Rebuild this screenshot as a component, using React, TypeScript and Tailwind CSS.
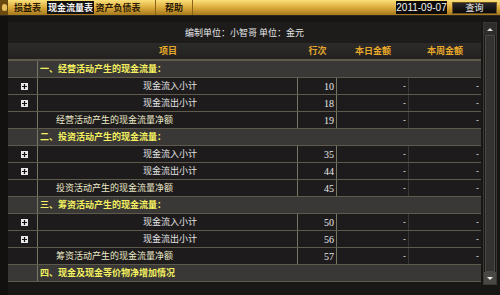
import React from 'react';

type Row =
  | { kind: 'section'; label: string }
  | { kind: 'sub'; label: string; no: number }
  | { kind: 'net'; label: string; no: number };

const rows: Row[] = [
  { kind: 'section', label: '一、经营活动产生的现金流量：' },
  { kind: 'sub', label: '现金流入小计', no: 10 },
  { kind: 'sub', label: '现金流出小计', no: 18 },
  { kind: 'net', label: '经营活动产生的现金流量净额', no: 19 },
  { kind: 'section', label: '二、投资活动产生的现金流量：' },
  { kind: 'sub', label: '现金流入小计', no: 35 },
  { kind: 'sub', label: '现金流出小计', no: 44 },
  { kind: 'net', label: '投资活动产生的现金流量净额', no: 45 },
  { kind: 'section', label: '三、筹资活动产生的现金流量：' },
  { kind: 'sub', label: '现金流入小计', no: 50 },
  { kind: 'sub', label: '现金流出小计', no: 56 },
  { kind: 'net', label: '筹资活动产生的现金流量净额', no: 57 },
  { kind: 'section', label: '四、现金及现金等价物净增加情况' },
];

const cjk = "font-['Noto_Sans_CJK_SC',sans-serif]";
const cols = 'grid grid-cols-[30px_260px_39px_72px_72px]';

function PlusBox() {
  return (
    <span className="flex h-[7px] w-[7px] items-center justify-center bg-[#e8e8e8]">
      <svg width="5" height="5" viewBox="0 0 5 5">
        <path d="M0 2.5h5M2.5 0v5" stroke="#111" strokeWidth="1.2" />
      </svg>
    </span>
  );
}

function TableRow({ row }: { row: Row }) {
  if (row.kind === 'section') {
    return (
      <div className={`${cols} h-[17px] border-b border-[#5f5b4c] bg-[#393837]`}>
        <div className="border-r border-[#7a7664]" />
        <div className={`col-span-4 flex items-center pl-[2px] text-[9px] font-bold text-[#f4f060] ${cjk}`}>
          {row.label}
        </div>
      </div>
    );
  }
  return (
    <div className={`${cols} h-[17px] border-b border-[#5f5b4c] bg-[#1e1b1d]`}>
      <div className="flex items-center justify-center border-r border-[#7a7664] pl-[3px]">
        {row.kind === 'sub' && <PlusBox />}
      </div>
      <div
        className={`flex items-center border-r border-[#7a7664] text-[9px] ${cjk} ${
          row.kind === 'sub' ? 'pl-[105px] text-[#e4e4e4]' : 'pl-[18px] text-[#ecebc8]'
        }`}
      >
        {row.label}
      </div>
      <div className="flex items-center justify-end border-r border-[#7a7664] pr-[2px] font-['Liberation_Serif',serif] text-[10px] text-[#e8e8e8]">
        {row.no}
      </div>
      <div className="flex items-center justify-end border-r border-[#3a3733] pr-[2px] text-[9px] text-[#ddd]">-</div>
      <div className="flex items-center justify-end pr-[2px] text-[9px] text-[#ddd]">-</div>
    </div>
  );
}

export default function App() {
  return (
    <div className="flex h-[295px] w-[500px] flex-col overflow-hidden bg-[#100f0d]">
      {/* top gold bar */}
      <div className={`flex h-[15px] items-center bg-gradient-to-b from-[#fbe07a] via-[#dcab3a] to-[#a6781c] text-[9px] font-bold ${cjk}`}>
        <div className="flex h-full w-[8px] items-center justify-center bg-[#6b4a10]">
          <span className="h-[7px] w-[5px] rounded-sm bg-[#e8c060]" />
        </div>
        <div className="w-[38px] pl-[1px] text-center text-[#2a1a05]">损益表</div>
        <div className="ml-[1px] flex h-[13px] w-[47px] items-center justify-center bg-[#141210] text-[#f4f4f4]">现金流量表</div>
        <div className="w-[48px] text-center text-[#2a1a05]">资产负债表</div>
        <div className="h-full w-[14px] border-r border-[#8a6418]" />
        <div className="w-[36px] text-center text-[#2a1a05]">帮助</div>
        <div className="h-full border-r border-[#8a6418]" />
        <div className="flex-1" />
        <div className="flex h-[13px] w-[51px] items-center justify-center bg-[#0c0b0a] font-['Liberation_Sans',sans-serif] text-[10px] font-normal text-[#f2f2f2]">
          2011-09-07
        </div>
        <div className="w-[5px]" />
        <div className="flex h-[12px] w-[45px] items-center justify-center border border-[#6a5020] bg-gradient-to-b from-[#2c2a27] to-[#080808] font-normal text-[#eee]">
          查询
        </div>
        <div className="w-[3px]" />
      </div>

      {/* body */}
      <div className="flex flex-1 border-t border-[#2a2620] bg-[#171615]">
        <div className="w-[8px] bg-[#121110]" />
        <div className="flex w-[473px] flex-col">
          <div className={`mt-[6px] flex h-[21px] items-center justify-center bg-[#1d1c1b] text-[9px] text-[#e6e6e6] ${cjk}`}>
            编制单位：小智哥 单位：金元
          </div>
          <div className={`${cols} h-[17px] items-center border-b border-[#5f5b4c] bg-gradient-to-b from-[#2d2c2b] to-[#222120] text-[9px] font-bold text-[#e8a82a] ${cjk}`}>
            <div />
            <div className="text-center">项目</div>
            <div className="text-center">行次</div>
            <div className="text-center">本日金额</div>
            <div className="text-center">本周金额</div>
          </div>
          <div className="border-t border-[#5f5b4c]">
            {rows.map((r, i) => (
              <TableRow key={i} row={r} />
            ))}
          </div>
          <div className="flex-1 bg-[#191817]" />
        </div>
        <div className="w-[2px]" />
        {/* scrollbar */}
        <div className="mt-[6px] mb-[10px] flex w-[14px] flex-col border border-[#3a3833] bg-[#1a1918]">
          <div className="flex h-[12px] items-center justify-center bg-[#2e2d2b]">
            <span className="h-0 w-0 border-x-[3px] border-b-[3px] border-x-transparent border-b-[#ddd]" />
          </div>
          <div className="mx-[1px] flex-1 border border-[#4a4844] bg-[#333230]" />
          <div className="flex h-[12px] items-center justify-center bg-[#4a4844]">
            <span className="h-0 w-0 border-x-[3px] border-t-[3px] border-x-transparent border-t-[#eee]" />
          </div>
        </div>
        <div className="w-[3px]" />
      </div>
    </div>
  );
}
